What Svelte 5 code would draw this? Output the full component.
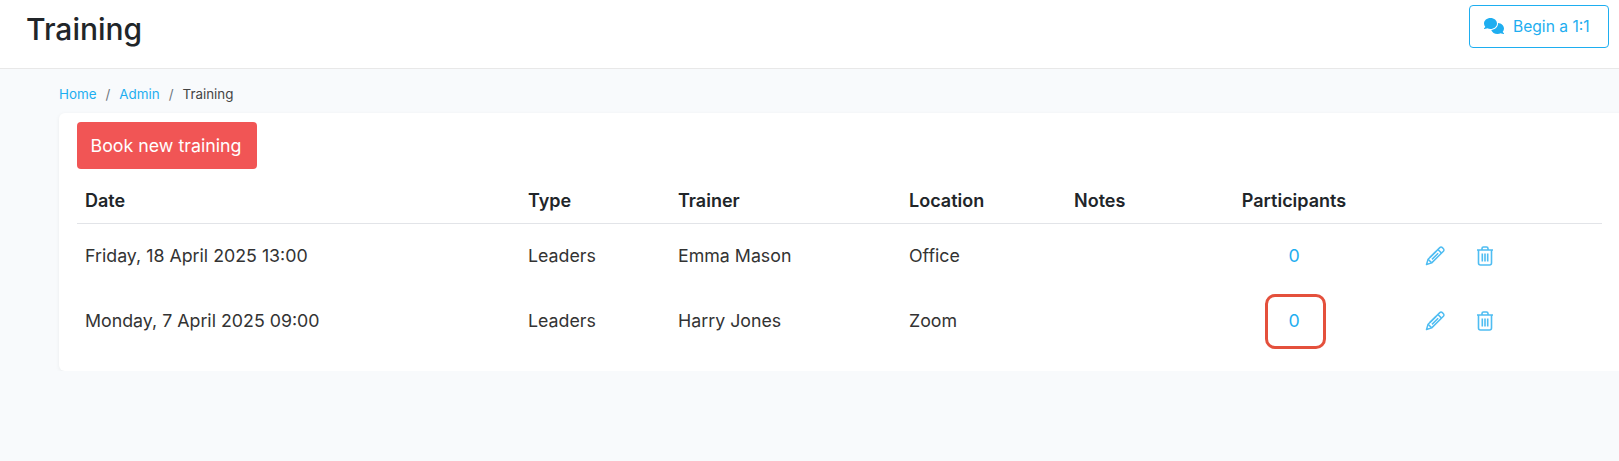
<script lang="ts">
    const rows = [
        { date: 'Friday, 18 April 2025 13:00', type: 'Leaders', trainer: 'Emma Mason', location: 'Office', notes: '', participants: 0, flagged: false },
        { date: 'Monday, 7 April 2025 09:00', type: 'Leaders', trainer: 'Harry Jones', location: 'Zoom', notes: '', participants: 0, flagged: true }
    ];
</script>

<header class="topbar">
    <h1>Training</h1>
    <button class="one-to-one">
        <svg width="20" height="16" viewBox="0 0 640 512" fill="currentColor" aria-hidden="true">
            <path d="M208 352c114.900 0 208-78.800 208-176S322.900 0 208 0S0 78.800 0 176c0 38.600 14.700 74.300 39.600 103.400c-3.500 9.400-8.700 17.700-14.200 24.700c-4.800 6.200-9.700 11-13.300 14.300c-1.800 1.600-3.300 2.900-4.300 3.700c-.5 .4-.9 .7-1.100 .8l-.2 .2C1 327.200-1.400 334.400 .8 340.900S9.100 352 16 352c21.800 0 43.800-5.600 62.100-12.500c9.200-3.500 17.800-7.400 25.200-11.400C134.100 343.300 169.800 352 208 352zM448 176c0 112.300-99.100 196.900-216.500 207C255.800 457.400 336.400 512 432 512c38.200 0 73.900-8.700 104.700-23.900c7.500 4 16 7.900 25.200 11.400c18.300 6.900 40.300 12.500 62.100 12.500c6.900 0 13.100-4.500 15.200-11.100c2.100-6.600-.2-13.800-5.800-17.900l-.2-.2c-.2-.2-.6-.4-1.100-.8c-1-.8-2.500-2-4.300-3.700c-3.600-3.300-8.500-8.100-13.300-14.300c-5.500-7-10.700-15.400-14.200-24.700c24.900-29 39.600-64.700 39.600-103.400c0-92.800-84.900-168.900-192.600-175.500c.4 5.100 .6 10.300 .6 15.500z"/>
        </svg>
        Begin a 1:1
    </button>
</header>

<main class="page">
    <nav class="crumbs">
        <a href="#home">Home</a><span class="sep">/</span><a href="#admin">Admin</a><span class="sep">/</span><span class="current">Training</span>
    </nav>

    <section class="card">
        <button class="book">Book new training</button>

        <table>
            <colgroup>
                <col style="width: 443px" />
                <col style="width: 150px" />
                <col style="width: 231px" />
                <col style="width: 165px" />
                <col style="width: 157px" />
                <col style="width: 142px" />
                <col />
            </colgroup>
            <thead>
                <tr>
                    <th>Date</th>
                    <th>Type</th>
                    <th>Trainer</th>
                    <th>Location</th>
                    <th>Notes</th>
                    <th class="center">Participants</th>
                    <th></th>
                </tr>
            </thead>
            <tbody>
                {#each rows as row}
                    <tr>
                        <td>{row.date}</td>
                        <td>{row.type}</td>
                        <td>{row.trainer}</td>
                        <td>{row.location}</td>
                        <td>{row.notes}</td>
                        <td class="center">
                            <span class="count" class:flagged={row.flagged}>
                                {row.participants}
                                {#if row.flagged}<span class="marker"></span>{/if}
                            </span>
                        </td>
                        <td>
                            <div class="actions">
                                <svg width="20" height="20" viewBox="0 0 20 20" fill="none" stroke="currentColor" stroke-width="1.5" stroke-linejoin="round" aria-hidden="true">
                                    <path d="M14.800 1.600c.7-.7 1.800-.7 2.500 0l1.100 1.100c.7.700.7 1.800 0 2.500L6.700 16.900 1.500 18.500l1.600-5.200z" />
                                    <path d="M12.900 3.500l3.600 3.600M3.100 13.300l3.600 3.600M5 11.400l6.200-6.200M7 13.400l6.200-6.200" />
                                </svg>
                                <svg width="18" height="20" viewBox="0 0 18 20" fill="none" stroke="currentColor" stroke-width="1.6" stroke-linejoin="round" aria-hidden="true">
                                    <path d="M1 4h16M6 4V2.500C6 1.700 6.700 1 7.500 1h3c.8 0 1.500.7 1.500 1.500V4" />
                                    <path d="M2.500 4v13c0 1.100.9 2 2 2h9c1.100 0 2-.9 2-2V4" />
                                    <path d="M6.300 7.500v8M9 7.500v8M11.700 7.500v8" />
                                </svg>
                            </div>
                        </td>
                    </tr>
                {/each}
            </tbody>
        </table>
    </section>
</main>

<style>
    :global(body) {
        margin: 0;
        background: #f8fafc;
        font-family: Inter, 'Liberation Sans', sans-serif;
        color: #333;
        overflow: hidden;
    }

    .topbar {
        display: flex;
        justify-content: space-between;
        align-items: center;
        height: 69px;
        box-sizing: border-box;
        padding: 0 10px 0 26px;
        background: #fff;
        border-bottom: 1px solid #e8e8e8;
    }

    h1 {
        margin: 0 0 10px;
        font-size: 30px;
        font-weight: 500;
        color: #212529;
    }

    .one-to-one {
        display: flex;
        align-items: center;
        gap: 9px;
        width: 140px;
        height: 43px;
        margin-bottom: 16px;
        padding: 0 0 0 14px;
        background: #fff;
        border: 1px solid #1eaef0;
        border-radius: 4px;
        color: #1eaef0;
        font: 15.6px Inter, sans-serif;
    }

    .page {
        padding: 17px 0 0 59px;
    }

    .crumbs {
        display: flex;
        height: 27px;
        font-size: 13.4px;
        line-height: 16px;
    }

    .crumbs a {
        color: #1eaef0;
        text-decoration: none;
    }

    .sep {
        padding: 0 9px;
        color: #6c757d;
    }

    .current {
        color: #444;
    }

    .card {
        width: 1600px;
        box-sizing: border-box;
        height: 258px;
        padding: 9px 0 0 18px;
        background: #fff;
        border-radius: 6px;
        box-shadow: 0 1px 4px rgba(0, 0, 0, 0.06);
    }

    .book {
        display: block;
        width: 180px;
        height: 47px;
        padding: 0 2px 0 0;
        background: #f15555;
        border: 0;
        border-radius: 4px;
        color: #fff;
        font: 17.8px Inter, sans-serif;
    }

    table {
        width: 1525px;
        table-layout: fixed;
        border-collapse: collapse;
        font-size: 17.8px;
        color: #333;
    }

    th,
    td {
        padding: 0 8px;
        text-align: left;
    }

    th {
        height: 54px;
        padding-top: 10px;
        box-sizing: border-box;
        font-size: 18px;
        font-weight: 600;
        color: #212529;
        border-bottom: 1px solid #e2e4e8;
        white-space: nowrap;
    }

    td {
        height: 64px;
    }

    tbody tr:last-child td {
        padding-top: 1px;
    }

    .center {
        text-align: center;
    }

    .count {
        position: relative;
        display: inline-block;
        color: #1eaef0;
    }

    .marker {
        position: absolute;
        left: -23px;
        top: -16px;
        width: 55px;
        height: 49px;
        border: 3px solid #e4503c;
        border-radius: 10px;
    }

    .actions {
        display: flex;
        align-items: center;
        gap: 31px;
        padding-left: 52px;
        color: #4fbdf2;
    }
</style>
